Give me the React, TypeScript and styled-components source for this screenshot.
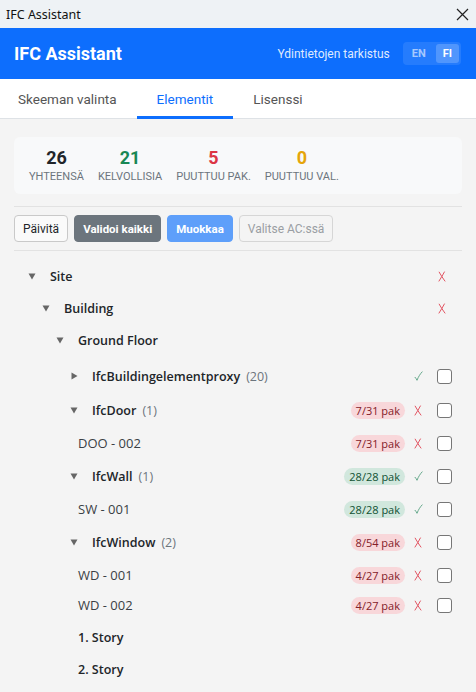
import React from 'react';
import styled, { createGlobalStyle } from 'styled-components';

const GlobalStyle = createGlobalStyle`
  html, body {
    margin: 0;
    padding: 0;
    background: #f4f4f4;
  }
  * {
    box-sizing: border-box;
  }
`;

const Window = styled.div`
  width: 476px;
  height: 692px;
  overflow: hidden;
  display: flex;
  flex-direction: column;
  font-family: Roboto, 'Noto Sans', sans-serif;
  background: #f4f4f4;
`;

const TitleBar = styled.div`
  height: 28px;
  flex-shrink: 0;
  display: flex;
  align-items: center;
  justify-content: space-between;
  padding: 0 7px 0 6px;
  background: #eef2f5;
  font-family: 'Noto Sans', sans-serif;
  font-size: 12.5px;
  color: #111;
`;

const Header = styled.header`
  height: 51px;
  flex-shrink: 0;
  display: flex;
  align-items: center;
  justify-content: space-between;
  padding: 0 15px 0 14px;
  background: #0d6efd;
  color: #fff;
`;

const AppTitle = styled.h1`
  margin: 0;
  font-size: 18px;
  font-weight: 700;
`;

const HeaderRight = styled.div`
  display: flex;
  align-items: center;
  gap: 13px;
  font-size: 12px;
  color: rgba(255, 255, 255, 0.88);
`;

const LangGroup = styled.div`
  display: flex;
  gap: 3px;
  padding: 2px;
  border-radius: 4px;
  background: rgba(255, 255, 255, 0.1);
`;

const LangButton = styled.button<{ $active?: boolean }>`
  border: none;
  height: 19px;
  padding: 0 7px;
  border-radius: 3px;
  font-family: Roboto, sans-serif;
  font-size: 11px;
  font-weight: 700;
  color: ${(p) => (p.$active ? '#fff' : 'rgba(255,255,255,0.6)')};
  background: ${(p) => (p.$active ? 'rgba(255,255,255,0.2)' : 'transparent')};
`;

const Tabs = styled.nav`
  height: 40px;
  flex-shrink: 0;
  display: flex;
  background: #fff;
  border-bottom: 1px solid #dee2e6;
`;

const Tab = styled.div<{ $active?: boolean }>`
  display: flex;
  align-items: center;
  padding: 2px 20px 0;
  font-size: 13.5px;
  color: ${(p) => (p.$active ? '#0d6efd' : '#555')};
  border-bottom: 3px solid ${(p) => (p.$active ? '#0d6efd' : 'transparent')};
  margin-bottom: -1px;
  &:first-child {
    padding-left: 18px;
  }
`;

const Content = styled.main`
  flex: 1;
  padding: 18px 14px 0;
`;

const StatsCard = styled.div`
  display: flex;
  gap: 14px;
  padding: 10px 15px;
  border-radius: 6px;
  background: #f8f9fa;
`;

const Stat = styled.div`
  display: flex;
  flex-direction: column;
  align-items: center;
`;

const StatValue = styled.div<{ $color: string }>`
  font-size: 18px;
  font-weight: 700;
  line-height: 22px;
  color: ${(p) => p.$color};
`;

const StatLabel = styled.div`
  font-size: 11px;
  line-height: 15px;
  color: #6c757d;
  text-transform: uppercase;
`;

const Divider = styled.hr<{ $after?: boolean }>`
  margin: ${(p) => (p.$after ? '8px 0 0' : '12px 0 8px')};
  border: none;
  border-top: 1px solid #e2e2e2;
`;

const Toolbar = styled.div`
  display: flex;
  gap: 6px;
`;

type Variant = 'light' | 'secondary' | 'primary' | 'outline';

const Button = styled.button<{ $variant: Variant }>`
  height: 27px;
  padding: 0 8px;
  border-radius: 4px;
  font-family: Roboto, sans-serif;
  font-size: ${(p) => (p.$variant === 'secondary' || p.$variant === 'primary' ? '11.5px' : '12px')};
  font-weight: ${(p) => (p.$variant === 'secondary' || p.$variant === 'primary' ? 700 : 400)};
  color: ${(p) =>
    p.$variant === 'light' ? '#212529' : p.$variant === 'outline' ? '#9a9ea3' : '#fff'};
  background: ${(p) =>
    p.$variant === 'secondary'
      ? '#6c757d'
      : p.$variant === 'primary'
      ? '#5e9ffa'
      : p.$variant === 'light'
      ? '#fafafa'
      : 'transparent'};
  border: 1px solid
    ${(p) =>
      p.$variant === 'secondary'
        ? '#6c757d'
        : p.$variant === 'primary'
        ? '#5e9ffa'
        : p.$variant === 'light'
        ? '#c9c9c9'
        : '#d6d6d6'};
`;

const TreeList = styled.div`
  margin-top: 9px;
  font-family: 'Open Sans', 'Noto Sans', sans-serif;
`;

const Row = styled.div<{ $indent: number; $tall?: boolean; $gap?: number }>`
  height: ${(p) => (p.$tall ? 34 : 32)}px;
  margin-top: ${(p) => p.$gap ?? 0}px;
  display: flex;
  align-items: center;
  padding-left: ${(p) => p.$indent}px;
  padding-right: 10px;
`;

const Toggle = styled.span`
  width: 22px;
  flex-shrink: 0;
  display: flex;
  align-items: center;
`;

const Name = styled.span<{ $leaf?: boolean }>`
  font-size: ${(p) => (p.$leaf ? '13px' : '12.5px')};
  font-weight: ${(p) => (p.$leaf ? 400 : 600)};
  color: ${(p) => (p.$leaf ? '#3a3f44' : '#212529')};
`;

const Count = styled.span`
  margin-left: 6px;
  font-size: 12.5px;
  color: #6c757d;
`;

const Right = styled.div`
  margin-left: auto;
  display: flex;
  align-items: center;
  gap: 3px;
`;

const Badge = styled.span<{ $ok?: boolean }>`
  height: 17px;
  display: flex;
  align-items: center;
  padding: 0 5px;
  border-radius: 9px;
  font-size: 11px;
  font-weight: 500;
  color: ${(p) => (p.$ok ? '#0f5132' : '#842029')};
  background: ${(p) => (p.$ok ? '#d1e7dd' : '#f8d7da')};
`;

const Status = styled.span`
  width: 20px;
  height: 14px;
  display: flex;
  align-items: center;
  justify-content: center;
`;

const Check = styled.span`
  width: 15px;
  height: 15px;
  margin-left: 6px;
  border: 1px solid #767676;
  border-radius: 3px;
  background: #fff;
`;

const Caret = ({ closed }: { closed?: boolean }) =>
  closed ? (
    <svg width="7" height="8" viewBox="0 0 7 8" style={{ marginLeft: 1 }}>
      <path d="M0.5 0.5 L6.5 4 L0.5 7.5 Z" fill="#666" />
    </svg>
  ) : (
    <svg width="8" height="7" viewBox="0 0 8 7">
      <path d="M0.5 0.5 L7.5 0.5 L4 6.5 Z" fill="#666" />
    </svg>
  );

const Cross = () => (
  <svg width="8" height="11" viewBox="0 0 8 11">
    <path d="M1 0.8 C2.5 3.5 5 7.5 7.2 10.4 M6.6 0.6 C5 3.5 3 7 0.8 10.4" stroke="#e25563" strokeWidth="1" fill="none" />
  </svg>
);

const Tick = () => (
  <svg width="9" height="10" viewBox="0 0 9 10">
    <path d="M0.8 6 C1.8 7 2.5 8.2 3 9.3 C4.5 5.5 6.3 2.8 8.4 0.6" stroke="#64a88a" strokeWidth="1" fill="none" />
  </svg>
);

type Node = {
  name: string;
  indent: number;
  toggle?: 'open' | 'closed';
  leaf?: boolean;
  count?: number;
  badge?: string;
  ok?: boolean;
  status?: boolean;
  checkbox?: boolean;
  tall?: boolean;
  gap?: number;
};

const rows: Node[] = [
  { name: 'Site', indent: 14, toggle: 'open', status: true, ok: false },
  { name: 'Building', indent: 28, toggle: 'open', status: true, ok: false },
  { name: 'Ground Floor', indent: 42, toggle: 'open' },
  { name: 'IfcBuildingelementproxy', indent: 56, toggle: 'closed', count: 20, status: true, ok: true, checkbox: true, tall: true, gap: 3 },
  { name: 'IfcDoor', indent: 56, toggle: 'open', count: 1, badge: '7/31 pak', status: true, ok: false, checkbox: true, tall: true },
  { name: 'DOO - 002', indent: 64, leaf: true, badge: '7/31 pak', status: true, ok: false, checkbox: true },
  { name: 'IfcWall', indent: 56, toggle: 'open', count: 1, badge: '28/28 pak', status: true, ok: true, checkbox: true, tall: true },
  { name: 'SW - 001', indent: 64, leaf: true, badge: '28/28 pak', status: true, ok: true, checkbox: true },
  { name: 'IfcWindow', indent: 56, toggle: 'open', count: 2, badge: '8/54 pak', status: true, ok: false, checkbox: true, tall: true },
  { name: 'WD - 001', indent: 64, leaf: true, badge: '4/27 pak', status: true, ok: false, checkbox: true },
  { name: 'WD - 002', indent: 64, leaf: true, badge: '4/27 pak', status: true, ok: false, checkbox: true, gap: -2 },
  { name: '1. Story', indent: 64 },
  { name: '2. Story', indent: 64 },
];

const CloseIcon = () => (
  <svg width="13" height="13" viewBox="0 0 13 13">
    <path d="M1 1 L12 12 M12 1 L1 12" stroke="#222" strokeWidth="1.2" />
  </svg>
);

const App: React.FC = () => {
  return (
    <Window>
      <GlobalStyle />
      <TitleBar>
        <span>IFC Assistant</span>
        <CloseIcon />
      </TitleBar>
      <Header>
        <AppTitle>IFC Assistant</AppTitle>
        <HeaderRight>
          <span>Ydintietojen tarkistus</span>
          <LangGroup>
            <LangButton>EN</LangButton>
            <LangButton $active>FI</LangButton>
          </LangGroup>
        </HeaderRight>
      </Header>
      <Tabs>
        <Tab>Skeeman valinta</Tab>
        <Tab $active>Elementit</Tab>
        <Tab>Lisenssi</Tab>
      </Tabs>
      <Content>
        <StatsCard>
          <Stat>
            <StatValue $color="#212529">26</StatValue>
            <StatLabel>Yhteensä</StatLabel>
          </Stat>
          <Stat>
            <StatValue $color="#198754">21</StatValue>
            <StatLabel>Kelvollisia</StatLabel>
          </Stat>
          <Stat>
            <StatValue $color="#dc3545">5</StatValue>
            <StatLabel>Puuttuu pak.</StatLabel>
          </Stat>
          <Stat>
            <StatValue $color="#e5a50a">0</StatValue>
            <StatLabel>Puuttuu val.</StatLabel>
          </Stat>
        </StatsCard>
        <Divider />
        <Toolbar>
          <Button $variant="light">Päivitä</Button>
          <Button $variant="secondary">Validoi kaikki</Button>
          <Button $variant="primary">Muokkaa</Button>
          <Button $variant="outline">Valitse AC:ssä</Button>
        </Toolbar>
        <Divider $after />
        <TreeList>
          {rows.map((r, i) => (
            <Row key={i} $indent={r.indent} $tall={r.tall} $gap={r.gap}>
              {r.toggle && (
                <Toggle>
                  <Caret closed={r.toggle === 'closed'} />
                </Toggle>
              )}
              <Name $leaf={r.leaf}>{r.name}</Name>
              {r.count !== undefined && <Count>({r.count})</Count>}
              {(r.badge || r.status || r.checkbox) && (
                <Right>
                  {r.badge && <Badge $ok={r.ok}>{r.badge}</Badge>}
                  {r.status && <Status>{r.ok ? <Tick /> : <Cross />}</Status>}
                  {r.checkbox && <Check />}
                </Right>
              )}
            </Row>
          ))}
        </TreeList>
      </Content>
    </Window>
  );
};

export default App;
